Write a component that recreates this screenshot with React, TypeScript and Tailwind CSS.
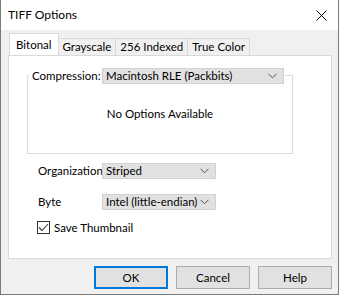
import React from 'react';

const font = { fontFamily: '"Segoe UI", Lato, "Liberation Sans", sans-serif' };

function Chevron() {
  return (
    <svg width="9" height="6" viewBox="0 0 9 6" className="shrink-0">
      <path d="M0.5 0.8 L4.5 4.8 L8.5 0.8" fill="none" stroke="#555" strokeWidth="1" />
    </svg>
  );
}

function Select({ value, width }: { value: string; width: string }) {
  return (
    <div className={`${width} h-[16px] flex items-center justify-between bg-[#e1e1e1] border border-[#d2d2d2] pl-[3px] pr-[6px] text-[11.5px] text-black whitespace-nowrap`}>
      <span className="leading-none">{value}</span>
      <Chevron />
    </div>
  );
}

function Tab({ label, active }: { label: string; active?: boolean }) {
  return active ? (
    <div className="h-[22px] px-[6px] bg-white border border-b-0 border-[#d9d9d9] flex items-center text-[11.5px] relative z-10 -mb-px whitespace-nowrap">
      {label}
    </div>
  ) : (
    <div className="h-[17px] mt-[5px] px-[4px] bg-[#f0f0f0] border border-l-0 border-b-0 border-[#d9d9d9] flex items-center text-[11.5px] whitespace-nowrap">
      {label}
    </div>
  );
}

function Button({ label, primary }: { label: string; primary?: boolean }) {
  return (
    <div
      className={`w-[74px] h-[23px] flex items-center justify-center text-[11.5px] bg-[#e1e1e1] border ${
        primary ? 'border-[#0078d7] border-2' : 'border-[#adadad]'
      }`}
    >
      {label}
    </div>
  );
}

export default function App() {
  return (
    <div style={font} className="w-[339px] h-[295px] flex flex-col border border-t-0 border-[#7a7a7a] bg-[#f0f0f0] text-black overflow-hidden">
      {/* Title bar */}
      <div className="h-[30px] bg-white flex items-center justify-between pl-[7px] pr-[11px] shrink-0">
        <span className="text-[12px]">TIFF Options</span>
        <svg width="11" height="11" viewBox="0 0 11 11">
          <path d="M0.5 0.5 L10.5 10.5 M10.5 0.5 L0.5 10.5" stroke="#000" strokeWidth="1" />
        </svg>
      </div>

      <div className="flex flex-col pl-[7px] pr-[6px] pt-[3px]">
        {/* Tabs */}
        <div className="flex items-start pl-[1px]">
          <Tab label="Bitonal" active />
          <Tab label="Grayscale" />
          <Tab label="256 Indexed" />
          <Tab label="True Color" />
        </div>

        {/* Panel */}
        <div className="h-[204px] bg-white border border-[#d9d9d9] flex flex-col pl-[18px] pt-[13px]">
          <div className="relative w-[266px] h-[79px] border border-[#dcdcdc] mt-[6px]">
            <div className="absolute -top-[9px] left-[1px] flex items-center bg-white gap-[3px] pr-[1px]">
              <span className="w-[70px] text-[11.5px] pl-[3px] whitespace-nowrap">Compression:</span>
              <Select value="Macintosh RLE (Packbits)" width="w-[182px]" />
            </div>
            <div className="h-full flex items-center justify-center text-[11.5px] pb-[2px]">
              No Options Available
            </div>
          </div>

          <div className="flex items-center mt-[9px] h-[16px]">
            <span className="w-[75px] pl-[11px] text-[11.5px] whitespace-nowrap">Organization</span>
            <Select value="Striped" width="w-[114px]" />
          </div>
          <div className="flex items-center mt-[15px] h-[16px]">
            <span className="w-[75px] pl-[11px] text-[11.5px] whitespace-nowrap">Byte</span>
            <Select value="Intel (little-endian)" width="w-[114px]" />
          </div>

          <div className="flex items-center gap-[4px] mt-[9px] pl-[10px]">
            <div className="w-[13px] h-[13px] border border-[#333] bg-white flex items-center justify-center">
              <svg width="11" height="9" viewBox="0 0 11 9">
                <path d="M1 4.5 L4 7.5 L10 1" fill="none" stroke="#333" strokeWidth="1.1" />
              </svg>
            </div>
            <span className="text-[11.5px]">Save Thumbnail</span>
          </div>
        </div>

        {/* Buttons */}
        <div className="flex justify-end gap-[8px] mt-[7px]">
          <Button label="OK" primary />
          <Button label="Cancel" />
          <Button label="Help" />
        </div>
      </div>
    </div>
  );
}
